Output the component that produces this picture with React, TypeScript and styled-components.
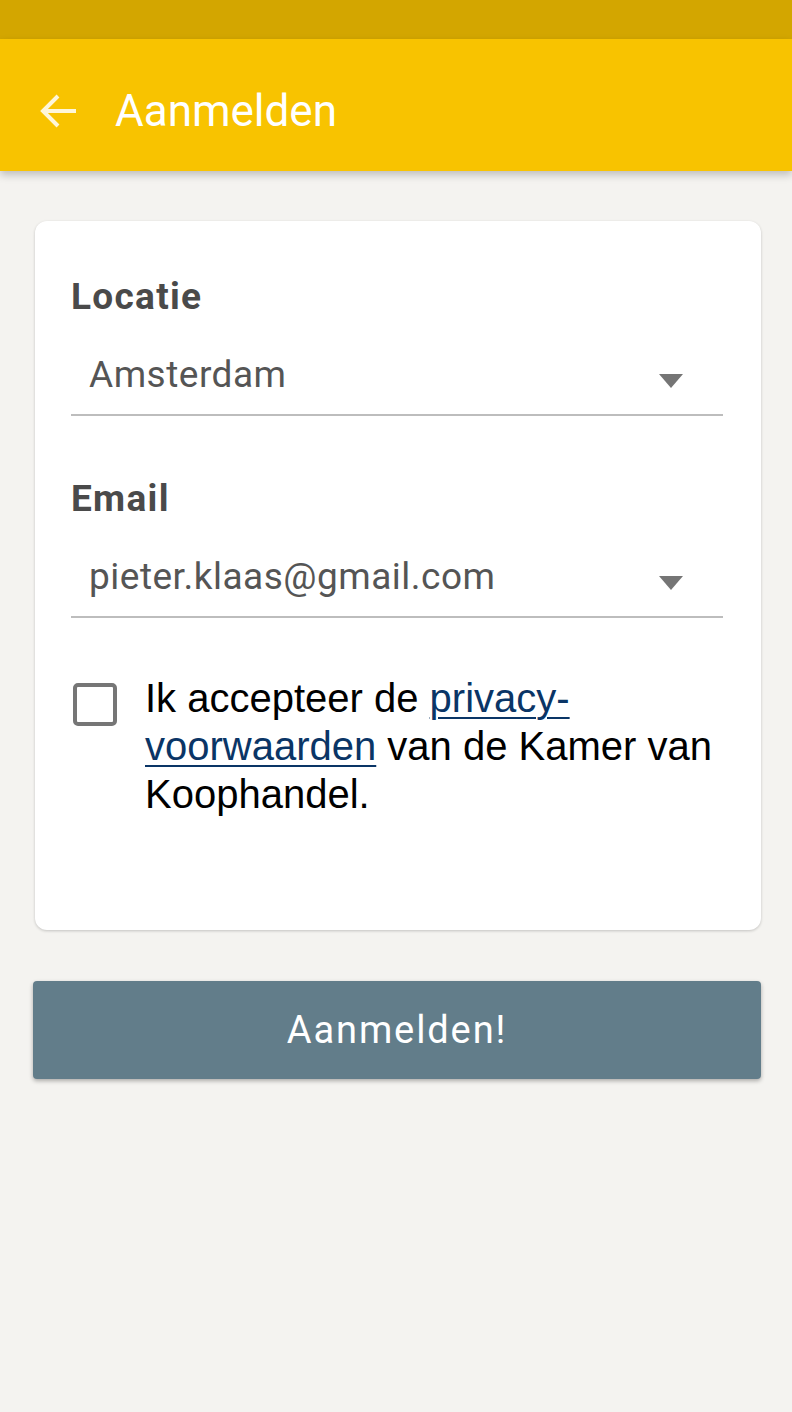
import React from 'react';
import styled, { createGlobalStyle } from 'styled-components';

const GlobalStyle = createGlobalStyle`
  html, body {
    margin: 0;
    padding: 0;
    background: #f4f3f0;
  }
  body {
    font-family: Roboto, "Noto Sans", sans-serif;
  }
`;

const Page = styled.div`
  min-height: 1412px;
  display: flex;
  flex-direction: column;
  background: #f4f3f0;
`;

const StatusBar = styled.div`
  height: 39px;
  background: #d3a600;
`;

const AppBar = styled.header`
  box-sizing: border-box;
  height: 132px;
  background: #f8c300;
  display: flex;
  align-items: center;
  padding: 12px 0 0 40px;
  box-shadow: 0 4px 8px rgba(0, 0, 0, 0.22);
  position: relative;
  z-index: 1;
`;

const BackButton = styled.button`
  background: none;
  border: 0;
  padding: 0;
  width: 37px;
  height: 34px;
  margin-right: 38px;
  display: flex;
  align-items: center;
  justify-content: center;
`;

const Title = styled.h1`
  margin: 0;
  font-family: Roboto, sans-serif;
  font-weight: 400;
  font-size: 44px;
  line-height: 1;
  color: #ffffff;
`;

const Content = styled.main`
  display: flex;
  flex-direction: column;
  padding: 50px 31px 0 35px;
`;

const Card = styled.section`
  background: #ffffff;
  border-radius: 12px;
  box-shadow: 0 1px 3px rgba(0, 0, 0, 0.2);
  padding: 54px 38px 112px 36px;
  display: flex;
  flex-direction: column;
`;

const Field = styled.div<{ $last?: boolean }>`
  display: flex;
  flex-direction: column;
  margin-bottom: ${p => (p.$last ? '56px' : '61px')};
`;

const Label = styled.label`
  font-family: Roboto, sans-serif;
  font-weight: 700;
  font-size: 37px;
  line-height: 44px;
  letter-spacing: 1.3px;
  color: #4a4a4a;
`;

const SelectRow = styled.div`
  display: flex;
  align-items: center;
  justify-content: space-between;
  margin-top: 34px;
  padding: 0 40px 17px 18px;
  border-bottom: 2px solid #bdbdbd;
`;

const Value = styled.span`
  font-family: Roboto, sans-serif;
  font-size: 37px;
  line-height: 44px;
  letter-spacing: 0.5px;
  color: #555555;
`;

const Caret = styled.span`
  width: 0;
  height: 0;
  margin-top: 12px;
  border-left: 12px solid transparent;
  border-right: 12px solid transparent;
  border-top: 14px solid #757575;
`;

const CheckRow = styled.div`
  display: flex;
  align-items: flex-start;
`;

const Checkbox = styled.span`
  flex: none;
  box-sizing: border-box;
  width: 44px;
  height: 43px;
  margin: 9px 28px 0 2px;
  border: 4px solid #767676;
  border-radius: 5px;
  background: #ffffff;
`;

const CheckText = styled.p`
  margin: 0;
  font-family: "Liberation Sans", Arial, sans-serif;
  font-size: 40px;
  line-height: 48px;
  color: #000000;
`;

const TermsLink = styled.a`
  color: #0a3566;
  text-decoration: underline;
  text-decoration-thickness: 2px;
  text-underline-offset: 5px;
`;

const SubmitButton = styled.button`
  margin: 51px 0 0 -2px;
  height: 98px;
  border: 0;
  border-radius: 4px;
  background: #627d8a;
  box-shadow: 0 2px 4px rgba(0, 0, 0, 0.3);
  font-family: Roboto, sans-serif;
  font-size: 38px;
  letter-spacing: 1.9px;
  color: #ffffff;
`;

const ArrowIcon = () => (
  <svg width="37" height="34" viewBox="0 0 37 34" fill="none">
    <path
      d="M36 17H4M18 2L3 17l15 15"
      stroke="rgba(255,255,255,0.85)"
      strokeWidth="4"
      strokeLinejoin="miter"
    />
  </svg>
);

const App: React.FC = () => {
  return (
    <>
      <GlobalStyle />
      <Page>
        <StatusBar />
        <AppBar>
          <BackButton aria-label="Terug">
            <ArrowIcon />
          </BackButton>
          <Title>Aanmelden</Title>
        </AppBar>
        <Content>
          <Card>
            <Field>
              <Label>Locatie</Label>
              <SelectRow>
                <Value>Amsterdam</Value>
                <Caret />
              </SelectRow>
            </Field>
            <Field $last>
              <Label>Email</Label>
              <SelectRow>
                <Value>pieter.klaas@gmail.com</Value>
                <Caret />
              </SelectRow>
            </Field>
            <CheckRow>
              <Checkbox />
              <CheckText>
                Ik accepteer de <TermsLink href="#">privacy-voorwaarden</TermsLink> van de Kamer van
                Koophandel.
              </CheckText>
            </CheckRow>
          </Card>
          <SubmitButton>Aanmelden!</SubmitButton>
        </Content>
      </Page>
    </>
  );
};

export default App;
